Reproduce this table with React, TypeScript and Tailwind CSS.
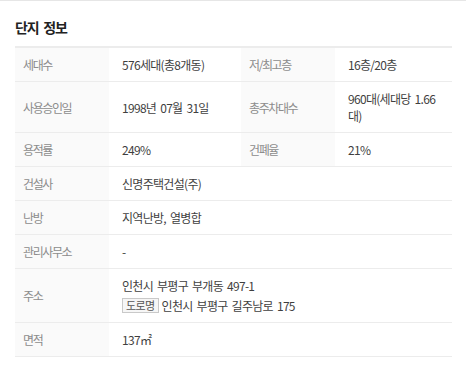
import type { ReactNode } from "react";

// 단지 정보 table: two label/value pairs per row, or one pair spanning the full width
type Row = {
  label: string;
  value: ReactNode;
  label2?: string;
  value2?: ReactNode;
};

const ROWS: Row[] = [
  { label: "세대수", value: "576세대(총8개동)", label2: "저/최고층", value2: "16층/20층" },
  {
    label: "사용승인일",
    value: "1998년 07월 31일",
    label2: "총주차대수",
    value2: (
      <>
        960대(세대당 1.66
        <br />
        대)
      </>
    ),
  },
  { label: "용적률", value: "249%", label2: "건폐율", value2: "21%" },
  { label: "건설사", value: "신명주택건설(주)" },
  { label: "난방", value: "지역난방, 열병합" },
  { label: "관리사무소", value: "-" },
  {
    label: "주소",
    value: (
      <>
        <div>인천시 부평구 부개동 497-1</div>
        <div className="mt-[3px] flex items-center gap-[3px]">
          <span className="inline-flex h-[15px] items-center border border-[#c9c9c9] bg-[#f6f6f6] px-[3px] text-[11px] tracking-[-0.6px] text-[#555]">
            도로명
          </span>
          <span>인천시 부평구 길주남로 175</span>
        </div>
      </>
    ),
  },
  { label: "면적", value: "137㎡" },
];

function Label({ children }: { children: ReactNode }) {
  return (
    <div className="flex items-center border-b border-[#ececec] bg-[#fafafa] py-2 pl-2 text-[#8c8c8c] tracking-[-1.4px]">
      {children}
    </div>
  );
}

function Value({ children, wide }: { children: ReactNode; wide?: boolean }) {
  return (
    <div
      className={`flex flex-col justify-center border-b border-[#ececec] py-2 pl-[13px] pr-2 text-[#3f3f3f] tracking-[-0.7px] [word-spacing:2px] ${
        wide ? "col-span-3" : ""
      }`}
    >
      {children}
    </div>
  );
}

export default function App() {
  return (
    <div
      className="h-[381px] w-[466px] border-t border-[#e6e6e6] bg-white"
      style={{ fontFamily: '"Noto Sans CJK KR", "Noto Sans", sans-serif' }}
    >
      <h2 className="pl-[15px] pt-[17px] text-[14px] font-bold leading-[18px] tracking-[-1.2px] text-[#222] [word-spacing:3px]">
        단지 정보
      </h2>

      <div className="ml-[15px] mt-[10px] grid w-[437px] grid-cols-[94px_132px_94px_117px] border-t-2 border-[#ececec] text-[12px] leading-[17px]">
        {ROWS.map((r) =>
          r.label2 ? (
            <div key={r.label} className="contents">
              <Label>{r.label}</Label>
              <Value>{r.value}</Value>
              <Label>{r.label2}</Label>
              <Value>{r.value2}</Value>
            </div>
          ) : (
            <div key={r.label} className="contents">
              <Label>{r.label}</Label>
              <Value wide>{r.value}</Value>
            </div>
          )
        )}
      </div>
    </div>
  );
}
